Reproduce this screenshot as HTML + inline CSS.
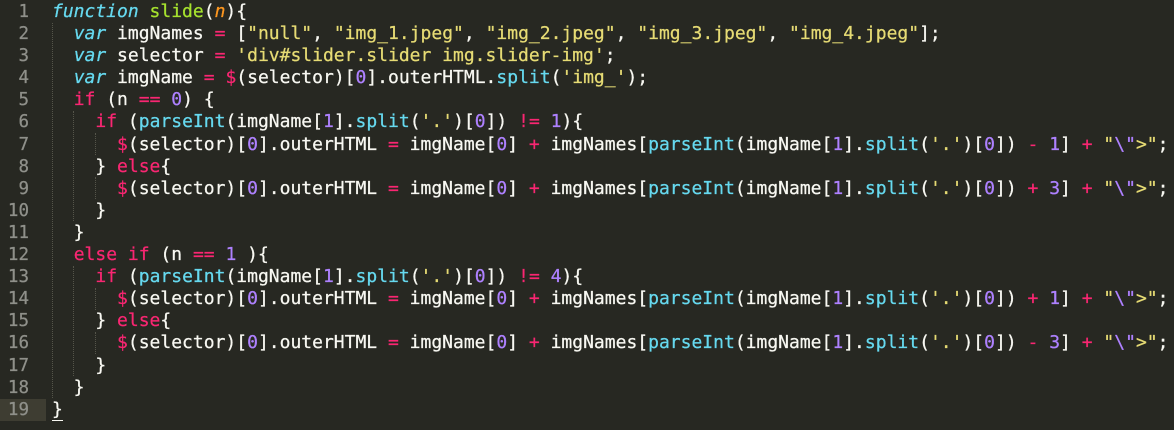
<!DOCTYPE html><html><head><style>
body{margin:0;background:#272822;width:1174px;height:430px;overflow:hidden}
.w{position:relative;font-family:"DejaVu Sans Mono","Liberation Mono",monospace;font-size:18px;line-height:22.1px;color:#f8f8f2;padding-top:1px;-webkit-text-stroke:0.25px}
.l{position:relative;height:22.1px;white-space:pre}
.n{position:absolute;left:0;width:29px;text-align:right;color:#8f908a;font-size:17.5px}
.c{position:absolute;left:52px}
.hl{position:absolute;left:0;top:0;width:46px;height:22.1px;background:#3e3d32}
.g{position:absolute;width:0;border-left:1px dotted #55554a}
.k{color:#f92672}.s{color:#66d9ef;font-style:italic}.f{color:#a6e22e}.p{color:#fd971f;font-style:italic}
.q{color:#e6db74}.m{color:#ae81ff}.b{color:#66d9ef}
</style></head><body><div class="w">
<div class="g" style="left:52px;top:23px;height:375px"></div>
<div class="g" style="left:73px;top:111px;height:110px"></div>
<div class="g" style="left:73px;top:266px;height:110px"></div>
<div class="g" style="left:95px;top:133px;height:22px"></div>
<div class="g" style="left:95px;top:177px;height:22px"></div>
<div class="g" style="left:95px;top:288px;height:22px"></div>
<div class="g" style="left:95px;top:332px;height:22px"></div>
<div class="l"><span class="n">1</span><span class="c"><span class="s">function</span> <span class="f">slide</span>(<span class="p">n</span>){</span></div>
<div class="l"><span class="n">2</span><span class="c">  <span class="s">var</span> imgNames <span class="k">=</span> [<span class="q">"null"</span>, <span class="q">"img_1.jpeg"</span>, <span class="q">"img_2.jpeg"</span>, <span class="q">"img_3.jpeg"</span>, <span class="q">"img_4.jpeg"</span>];</span></div>
<div class="l"><span class="n">3</span><span class="c">  <span class="s">var</span> selector <span class="k">=</span> <span class="q">'div#slider.slider img.slider-img'</span>;</span></div>
<div class="l"><span class="n">4</span><span class="c">  <span class="s">var</span> imgName <span class="k">=</span> <span class="k">$</span>(selector)[<span class="m">0</span>].outerHTML.<span class="b">split</span>(<span class="q">'img_'</span>);</span></div>
<div class="l"><span class="n">5</span><span class="c">  <span class="k">if</span> (n <span class="k">==</span> <span class="m">0</span>) {</span></div>
<div class="l"><span class="n">6</span><span class="c">    <span class="k">if</span> (<span class="b">parseInt</span>(imgName[<span class="m">1</span>].<span class="b">split</span>(<span class="q">'.'</span>)[<span class="m">0</span>]) <span class="k">!=</span> <span class="m">1</span>){</span></div>
<div class="l"><span class="n">7</span><span class="c">      <span class="k">$</span>(selector)[<span class="m">0</span>].outerHTML <span class="k">=</span> imgName[<span class="m">0</span>] <span class="k">+</span> imgNames[<span class="b">parseInt</span>(imgName[<span class="m">1</span>].<span class="b">split</span>(<span class="q">'.'</span>)[<span class="m">0</span>]) <span class="k">-</span> <span class="m">1</span>] <span class="k">+</span> <span class="q">"<span class="m">\"</span>&gt;"</span>;</span></div>
<div class="l"><span class="n">8</span><span class="c">    } <span class="k">else</span>{</span></div>
<div class="l"><span class="n">9</span><span class="c">      <span class="k">$</span>(selector)[<span class="m">0</span>].outerHTML <span class="k">=</span> imgName[<span class="m">0</span>] <span class="k">+</span> imgNames[<span class="b">parseInt</span>(imgName[<span class="m">1</span>].<span class="b">split</span>(<span class="q">'.'</span>)[<span class="m">0</span>]) <span class="k">+</span> <span class="m">3</span>] <span class="k">+</span> <span class="q">"<span class="m">\"</span>&gt;"</span>;</span></div>
<div class="l"><span class="n">10</span><span class="c">    }</span></div>
<div class="l"><span class="n">11</span><span class="c">  }</span></div>
<div class="l"><span class="n">12</span><span class="c">  <span class="k">else</span> <span class="k">if</span> (n <span class="k">==</span> <span class="m">1</span> ){</span></div>
<div class="l"><span class="n">13</span><span class="c">    <span class="k">if</span> (<span class="b">parseInt</span>(imgName[<span class="m">1</span>].<span class="b">split</span>(<span class="q">'.'</span>)[<span class="m">0</span>]) <span class="k">!=</span> <span class="m">4</span>){</span></div>
<div class="l"><span class="n">14</span><span class="c">      <span class="k">$</span>(selector)[<span class="m">0</span>].outerHTML <span class="k">=</span> imgName[<span class="m">0</span>] <span class="k">+</span> imgNames[<span class="b">parseInt</span>(imgName[<span class="m">1</span>].<span class="b">split</span>(<span class="q">'.'</span>)[<span class="m">0</span>]) <span class="k">+</span> <span class="m">1</span>] <span class="k">+</span> <span class="q">"<span class="m">\"</span>&gt;"</span>;</span></div>
<div class="l"><span class="n">15</span><span class="c">    } <span class="k">else</span>{</span></div>
<div class="l"><span class="n">16</span><span class="c">      <span class="k">$</span>(selector)[<span class="m">0</span>].outerHTML <span class="k">=</span> imgName[<span class="m">0</span>] <span class="k">+</span> imgNames[<span class="b">parseInt</span>(imgName[<span class="m">1</span>].<span class="b">split</span>(<span class="q">'.'</span>)[<span class="m">0</span>]) <span class="k">-</span> <span class="m">3</span>] <span class="k">+</span> <span class="q">"<span class="m">\"</span>&gt;"</span>;</span></div>
<div class="l"><span class="n">17</span><span class="c">    }</span></div>
<div class="l"><span class="n">18</span><span class="c">  }</span></div>
<div class="l"><span class="hl"></span><span class="n">19</span><span class="c"><span style="border-bottom:1px solid #f8f8f2">}</span></span></div>
</div></body></html>
